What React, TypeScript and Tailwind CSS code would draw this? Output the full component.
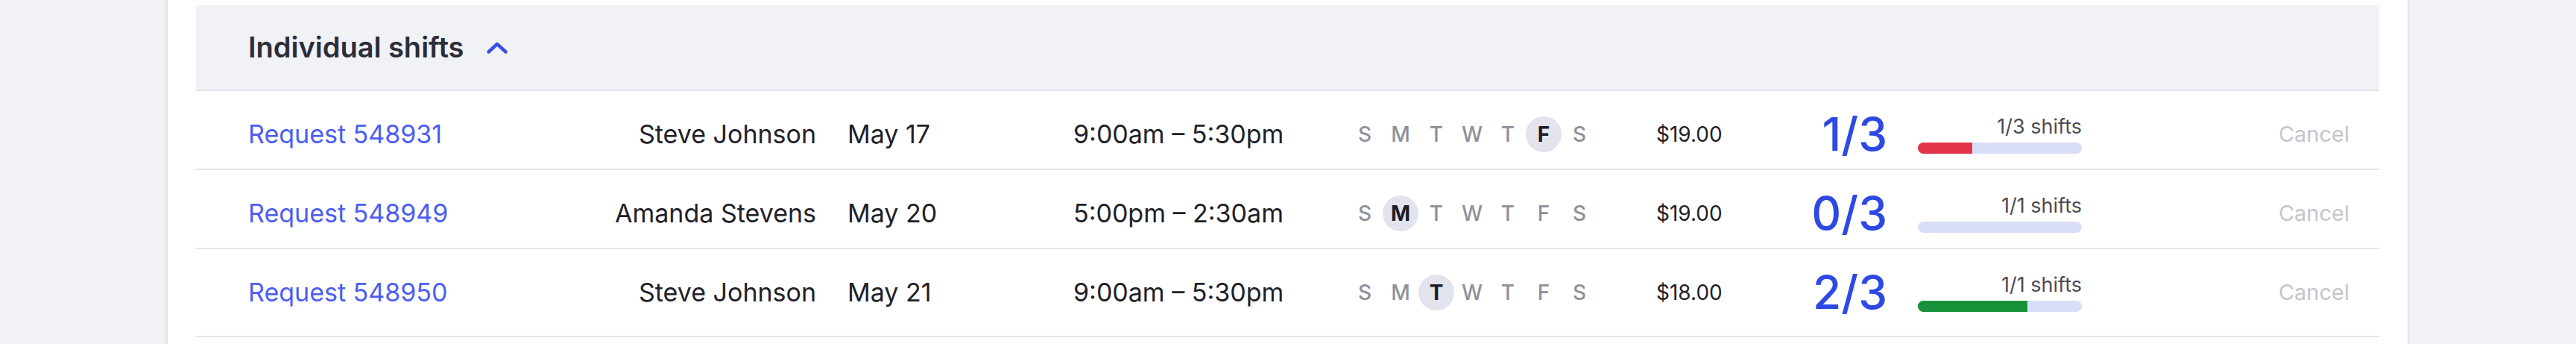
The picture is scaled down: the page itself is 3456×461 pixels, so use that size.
import React from "react";

type Row = {
  id: string;
  name: string;
  date: string;
  time: string;
  day: number;
  price: string;
  filled: number;
  total: number;
  label: string;
  color: string;
};

const rows: Row[] = [
  { id: "548931", name: "Steve Johnson", date: "May 17", time: "9:00am – 5:30pm", day: 5, price: "$19.00", filled: 1, total: 3, label: "1/3 shifts", color: "#e3334a" },
  { id: "548949", name: "Amanda Stevens", date: "May 20", time: "5:00pm – 2:30am", day: 1, price: "$19.00", filled: 0, total: 3, label: "1/1 shifts", color: "#e3334a" },
  { id: "548950", name: "Steve Johnson", date: "May 21", time: "9:00am – 5:30pm", day: 2, price: "$18.00", filled: 2, total: 3, label: "1/1 shifts", color: "#17923a" },
];

const days = ["S", "M", "T", "W", "T", "F", "S"];

function ShiftRow({ r, last }: { r: Row; last: boolean }) {
  return (
    <div
      className={
        last
          ? "flex items-center h-[118px] pt-[11px] pb-[12px] pl-[70px] pr-[40px] border-b-2 border-[#e3e3eb]"
          : "flex items-center h-[106px] pt-[11px] pl-[70px] pr-[40px] border-b-2 border-[#e3e3eb]"
      }
    >
      <div className="w-[480px] shrink-0 text-[34px] leading-[40px] text-[#4c5ef2] whitespace-nowrap">
        Request {r.id}
      </div>
      <div className="w-[282px] shrink-0 text-right text-[34px] leading-[40px] text-[#1f2129] whitespace-nowrap">
        {r.name}
      </div>
      <div className="ml-[42px] w-[303px] shrink-0 text-[34px] leading-[40px] text-[#1f2129] whitespace-nowrap">
        {r.date}
      </div>
      <div className="w-[367px] shrink-0 text-[34px] leading-[40px] text-[#1f2129] whitespace-nowrap">
        {r.time}
      </div>
      <div className="flex shrink-0">
        {days.map((d, i) =>
          i === r.day ? (
            <div
              key={i}
              className="w-[48px] h-[48px] rounded-full bg-[#e2e3ec] flex items-center justify-center text-[28px] font-bold text-[#1b1d26]"
            >
              {d}
            </div>
          ) : (
            <div
              key={i}
              className="w-[48px] h-[48px] flex items-center justify-center text-[28px] font-medium text-[#8e909b]"
            >
              {d}
            </div>
          )
        )}
      </div>
      <div className="ml-[79px] w-[150px] shrink-0 text-[28px] leading-[34px] text-[#1f2129] whitespace-nowrap">
        {r.price}
      </div>
      <div className="w-[160px] shrink-0 text-right text-[62px] leading-[64px] font-medium text-[#2e49e3] whitespace-nowrap">
        {r.filled}/{r.total}
      </div>
      <div className="ml-[41px] w-[220px] shrink-0 flex flex-col items-end">
        <div className="text-[27px] leading-[32px] text-[#4a4c57] whitespace-nowrap">{r.label}</div>
        <div className="mt-[5px] w-[220px] h-[15px] rounded-full bg-[#d9ddf7] overflow-hidden">
          <div
            className="h-full"
            style={{ width: `${(r.filled / r.total) * 100}%`, backgroundColor: r.color }}
          />
        </div>
      </div>
      <div className="ml-auto text-[29px] leading-[34px] text-[#c4c5ce] whitespace-nowrap">Cancel</div>
    </div>
  );
}

export default function App() {
  return (
    <div
      className="w-[3456px] h-[461px] bg-[#f1f2f6] overflow-hidden"
      style={{ fontFamily: "Inter, 'Noto Sans', sans-serif" }}
    >
      <div className="ml-[222px] w-[3011px] h-[461px] bg-white border-x-[3px] border-[#e5e6ec] px-[38px] pt-[7px]">
        <div className="h-[115px] bg-[#f1f2f6] border-b-2 border-[#e3e3eb] flex items-center pl-[70px]">
          <span className="text-[38px] font-semibold text-[#2b2d39] whitespace-nowrap">Individual shifts</span>
          <svg className="ml-[30px]" width="30" height="18" viewBox="0 0 30 18" fill="none">
            <path d="M3.5 14.5 L15 4 L26.5 14.5" stroke="#3b4fe4" strokeWidth="4.5" strokeLinecap="round" strokeLinejoin="round" />
          </svg>
        </div>
        {rows.map((r, i) => (
          <ShiftRow key={r.id} r={r} last={i === rows.length - 1} />
        ))}
      </div>
    </div>
  );
}
